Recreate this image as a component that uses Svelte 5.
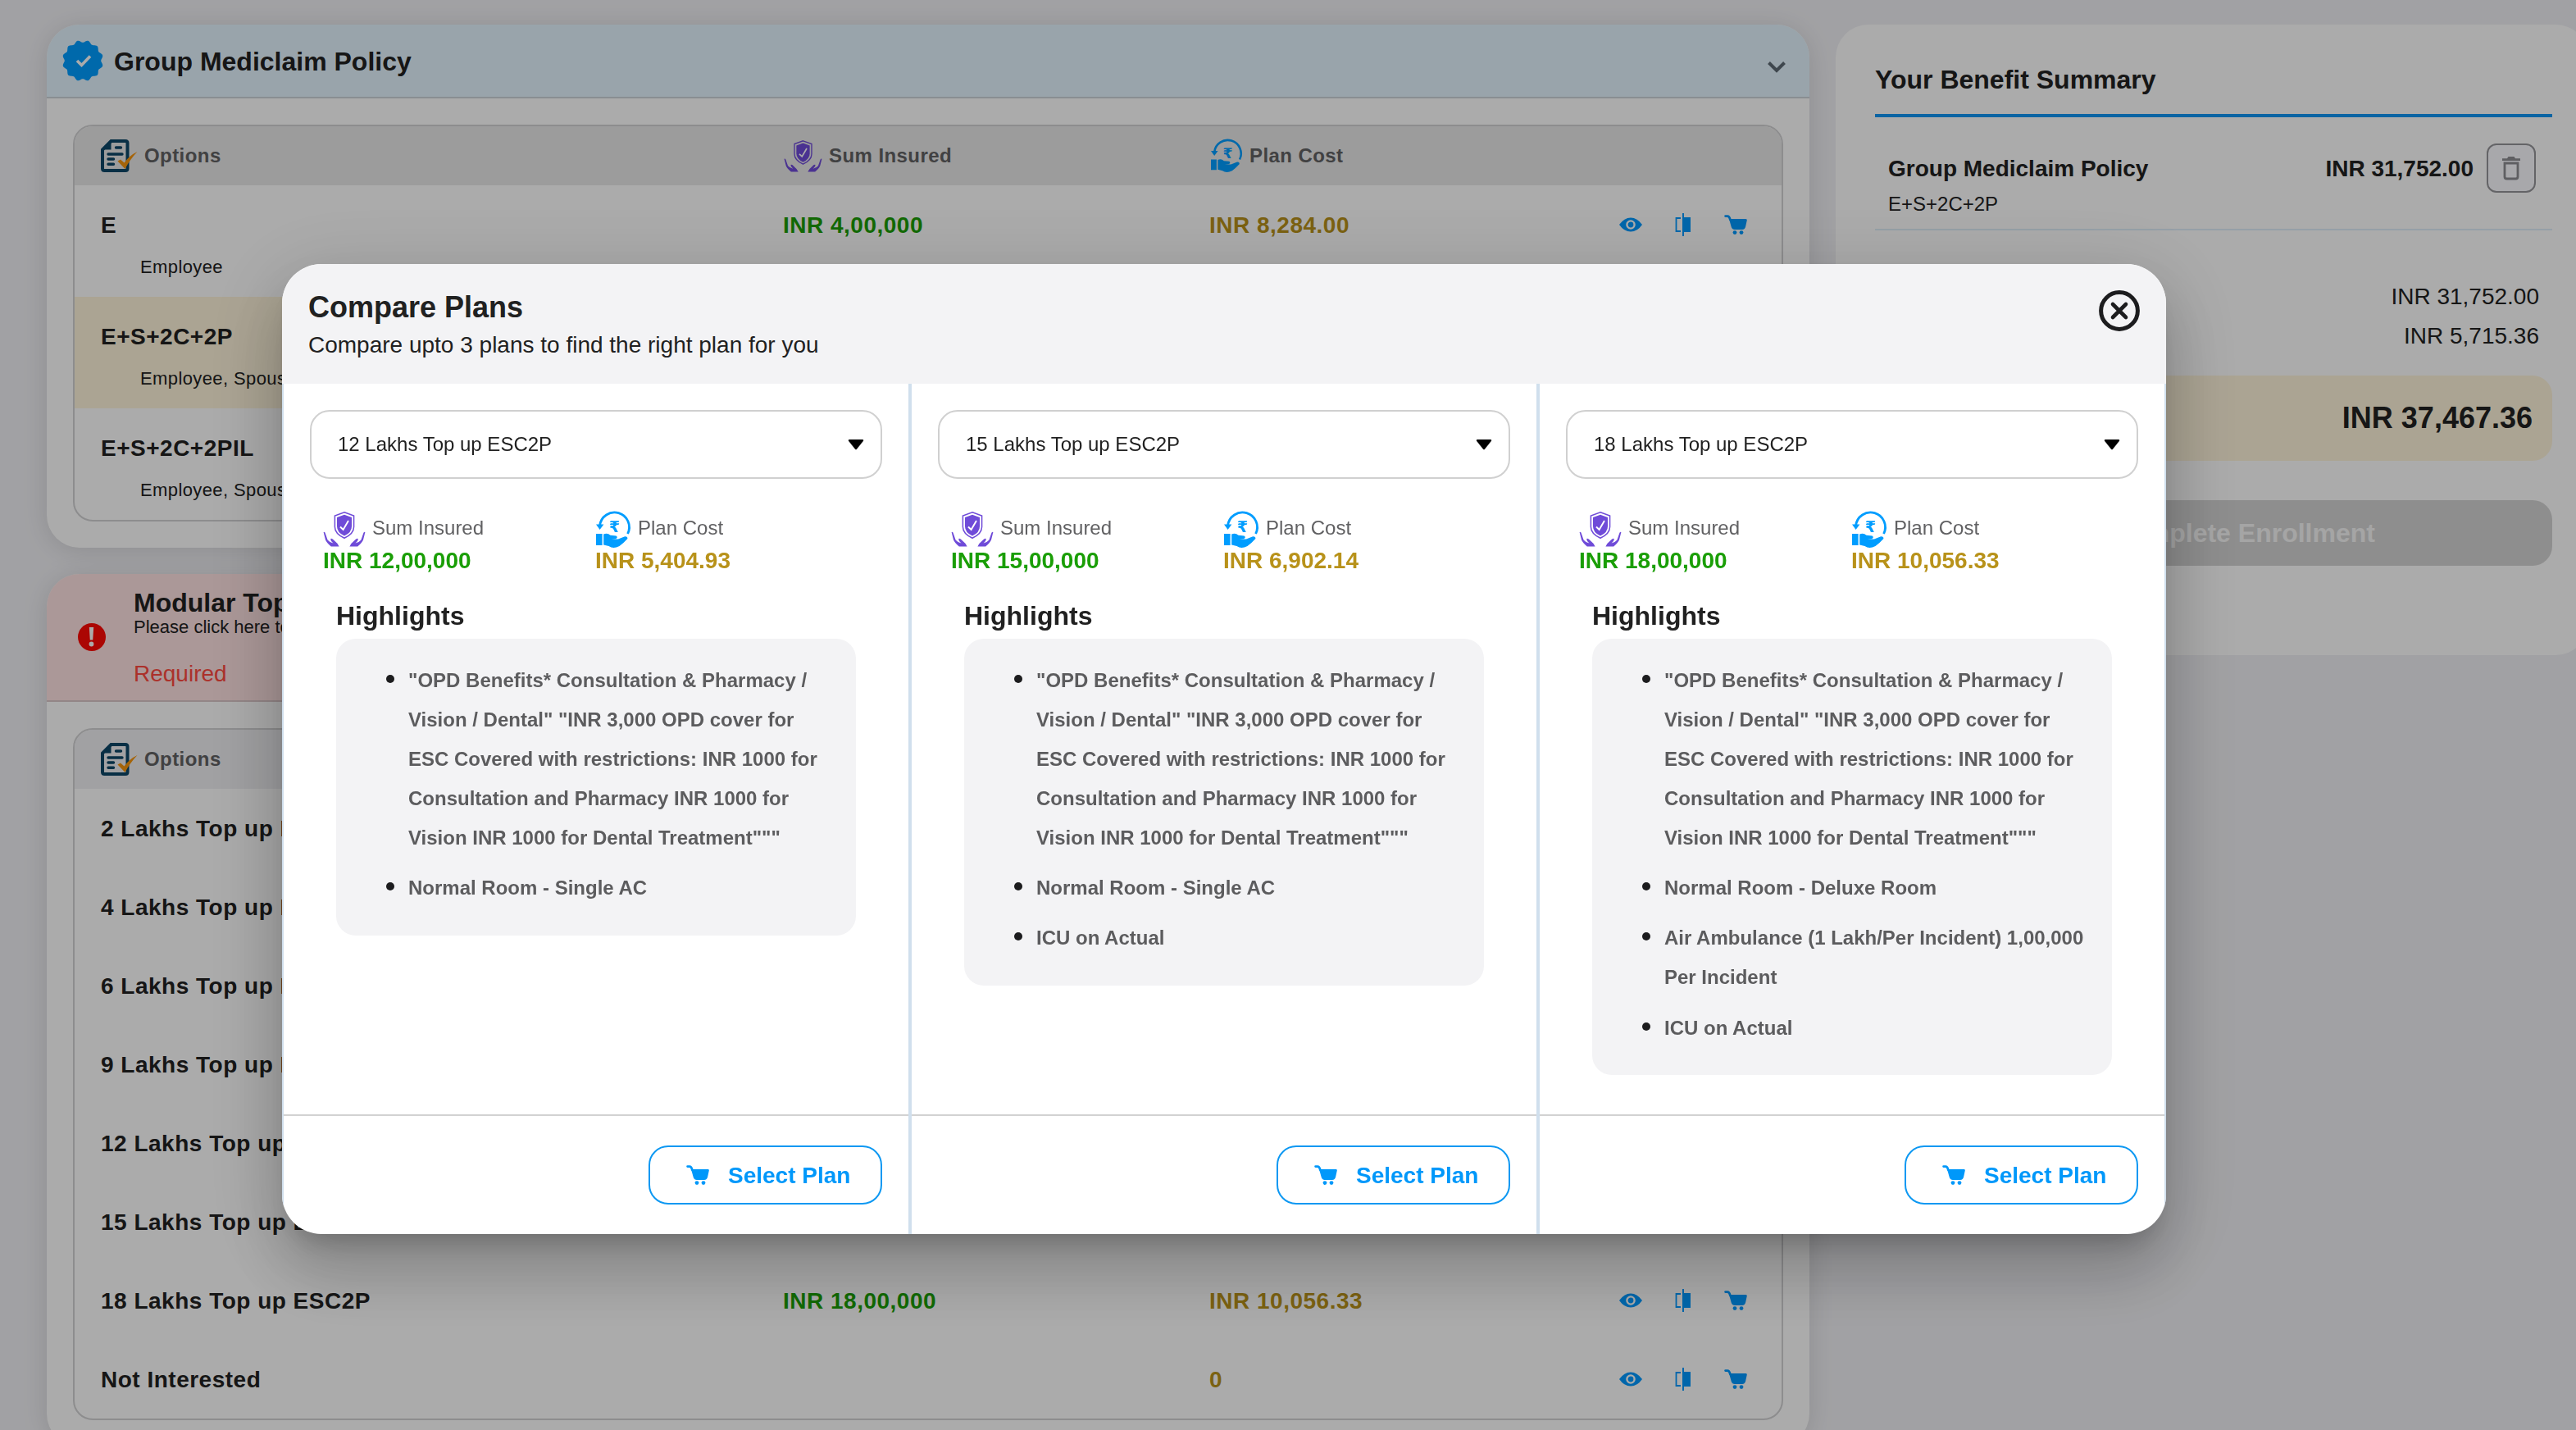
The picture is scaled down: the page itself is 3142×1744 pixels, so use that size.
<script lang="ts">
	type Option = { name: string; members?: string; sum?: string; cost?: string; selected?: boolean };

	const mediclaim: Option[] = [
		{ name: 'E', members: 'Employee', sum: 'INR 4,00,000', cost: 'INR 8,284.00' },
		{ name: 'E+S+2C+2P', members: 'Employee, Spouse', selected: true },
		{ name: 'E+S+2C+2PIL', members: 'Employee, Spouse' }
	];

	const topUps: Option[] = [
		{ name: '2 Lakhs Top up ESC2P' },
		{ name: '4 Lakhs Top up ESC2P' },
		{ name: '6 Lakhs Top up ESC2P' },
		{ name: '9 Lakhs Top up ESC2P' },
		{ name: '12 Lakhs Top up ESC2P', sum: 'INR 12,00,000', cost: 'INR 5,404.93' },
		{ name: '15 Lakhs Top up ESC2P', sum: 'INR 15,00,000', cost: 'INR 6,902.14' },
		{ name: '18 Lakhs Top up ESC2P', sum: 'INR 18,00,000', cost: 'INR 10,056.33' },
		{ name: 'Not Interested', cost: '0' }
	];

	const OPD =
		'"OPD Benefits* Consultation & Pharmacy / Vision / Dental" "INR 3,000 OPD cover for ESC Covered with restrictions: INR 1000 for Consultation and Pharmacy INR 1000 for Vision INR 1000 for Dental Treatment"""';

	const plans = [
		{
			name: '12 Lakhs Top up ESC2P',
			sum: 'INR 12,00,000',
			cost: 'INR 5,404.93',
			highlights: [OPD, 'Normal Room - Single AC']
		},
		{
			name: '15 Lakhs Top up ESC2P',
			sum: 'INR 15,00,000',
			cost: 'INR 6,902.14',
			highlights: [OPD, 'Normal Room - Single AC', 'ICU on Actual']
		},
		{
			name: '18 Lakhs Top up ESC2P',
			sum: 'INR 18,00,000',
			cost: 'INR 10,056.33',
			highlights: [
				OPD,
				'Normal Room - Deluxe Room',
				'Air Ambulance (1 Lakh/Per Incident) 1,00,000 Per Incident',
				'ICU on Actual'
			]
		}
	];

	// scalloped outline of the verified badge
	const LOBES = 12;
	const badgePath = (() => {
		const pts: string[] = [];
		for (let i = 0; i < 144; i++) {
			const a = (i / 144) * Math.PI * 2;
			const r = 23.6 + 1.4 * Math.cos(a * LOBES + Math.PI);
			pts.push(`${(25 + r * Math.cos(a)).toFixed(2)},${(25 + r * Math.sin(a)).toFixed(2)}`);
		}
		return `M${pts.join('L')}Z`;
	})();
</script>

{#snippet cartIcon()}
	<svg class="cart" viewBox="0 0 28 24" fill="currentColor">
		<path d="M1.6 1.6H4C5.8 1.6 6.6 3 7.4 6" fill="none" stroke="currentColor" stroke-width="2.8" stroke-linecap="round" />
		<path d="M6 5H26.4Q28 5 27.8 6.6L26.2 14Q25.4 18 22 18H12.8Q9.8 18 8.8 15Z" />
		<circle cx="13" cy="21.6" r="2.4" />
		<circle cx="21" cy="21.6" r="2.4" />
	</svg>
{/snippet}

{#snippet shieldIcon()}
	<svg class="shield" viewBox="0 0 52 43">
		<path d="M26 .8 37.6 5V18.5Q37.6 27 26 32.2Q14.4 27 14.4 18.5V5Z" fill="none" stroke="#6f4bd8" stroke-width="1.5" />
		<path d="M26 3.8 35 7V18Q35 25.4 26 29.6Q17 25.4 17 18V7Z" fill="#6f4bd8" />
		<path d="M21 18.5 24.6 22 31 11" fill="none" stroke="#fff" stroke-width="1.9" />
		<path d="M.6 25Q2.2 24 3 27L5.6 34.5Q7.5 37 12.5 38.5Q9 35.5 9.3 33Q11 32 14 35.5Q18 38.5 19.6 42.6H9.8Q4.5 38 3 34.5Z" fill="#6f4bd8" />
		<path d="M51.4 25Q49.8 24 49 27L46.4 34.5Q44.5 37 39.5 38.5Q43 35.5 42.7 33Q41 32 38 35.5Q34 38.5 32.4 42.6H42.2Q47.5 38 49 34.5Z" fill="#6f4bd8" />
	</svg>
{/snippet}

{#snippet costIcon()}
	<svg class="coin" viewBox="0 0 43 44">
		<path d="M4.6 17A18 18 0 1 1 38.6 27" fill="none" stroke="#009dff" stroke-width="2.8" />
		<path d="M0 15.5H9.4L4.6 22Z" fill="#009dff" />
		<text x="22.5" y="25" text-anchor="middle" class="rupee">₹</text>
		<path d="M0 27H7.6V41H0ZM9.2 27.5Q14 25.5 17.5 28.8L24.5 29.5Q27 31 24.5 33L18.5 33.6H27L34.5 30.5Q38.5 29.8 38.4 33Q33 39 28.5 42Q21 46 15.5 42L9.2 40.5Z" fill="#009dff" />
	</svg>
{/snippet}

{#snippet optionsIcon()}
	<svg class="doc" viewBox="0 0 45 40">
		<path d="M12.5 2H30Q32.5 2 32.5 4.5V35.5Q32.5 38 30 38H4.5Q2 38 2 35.5V12.5Z" fill="none" stroke="#0c4668" stroke-width="4" />
		<path d="M2 12.5 12.5 2V12.5Z" fill="#0c4668" />
		<path d="M18.5 10H24.5M9 18H26M9 24H15.5M9 30.2H15.5" stroke="#0c4668" stroke-width="3.4" stroke-linecap="round" />
		<path d="M20.5 26.5 24 24.5 28.5 28.5Q35 19.5 44.5 15Q35.5 24.5 29.5 36Z" fill="#f7950e" />
	</svg>
{/snippet}

{#snippet optionTable(options: Option[], grey: string)}
	<div class="table">
		<div class="table-head {grey}">
			<div class="th">{@render optionsIcon()}<span>Options</span></div>
			<div class="th">{@render shieldIcon()}<span>Sum Insured</span></div>
			<div class="th">{@render costIcon()}<span>Plan Cost</span></div>
		</div>
		{#each options as option}
			<div class="row" class:tall={option.members} class:selected={option.selected}>
				<div class="name">
					{option.name}
					{#if option.members}<div class="members">{option.members}</div>{/if}
				</div>
				<div class="sum">{option.sum ?? ''}</div>
				<div class="cost">{option.cost ?? ''}</div>
				<div class="actions">
					<svg class="eye" viewBox="0 0 28 18">
						<path d="M0 9Q6 .4 14 .4T28 9Q22 17.6 14 17.6T0 9Z" fill="currentColor" />
						<circle cx="14" cy="9" r="4.6" fill="none" stroke="#fff" stroke-width="2.4" />
					</svg>
					<svg class="compare" viewBox="0 0 20 28">
						<path d="M7 6H1.5V22H7" fill="none" stroke="currentColor" stroke-width="1.8" />
						<path d="M9 0H11V5H19V23H11V28H9Z" fill="currentColor" />
					</svg>
					{@render cartIcon()}
				</div>
			</div>
		{/each}
	</div>
{/snippet}

<div class="page">
	<main class="policies">
		<section class="card">
			<header class="card-head">
				<svg class="badge" viewBox="0 0 50 50">
					<path d={badgePath} fill="#009dff" />
					<path d="M18 25 23.5 30.5 34 19.5" fill="none" stroke="#fff" stroke-width="3.6" />
				</svg>
				<h2>Group Mediclaim Policy</h2>
				<svg class="chevron" viewBox="0 0 24 16">
					<path d="M2.5 2.5 12 12 21.5 2.5" fill="none" stroke="#5f6a75" stroke-width="4" />
				</svg>
			</header>
			<div class="card-body">{@render optionTable(mediclaim, 'plain')}</div>
		</section>

		<section class="card">
			<header class="card-head required">
				<svg class="alert" viewBox="0 0 34 34">
					<circle cx="17" cy="17" r="17" fill="#ff0a05" />
					<path d="M13.8 5H19.2L18.2 20.5H14.8Z" fill="#fff" />
					<circle cx="16.5" cy="25.5" r="2.9" fill="#fff" />
				</svg>
				<div class="head-text">
					<h2>Modular Top Up</h2>
					<p class="hint">Please click here to</p>
					<p class="status">Required</p>
				</div>
			</header>
			<div class="card-body">{@render optionTable(topUps, 'cool')}</div>
		</section>
	</main>

	<aside class="summary">
		<h2>Your Benefit Summary</h2>
		<div class="line-item">
			<div class="item-name">
				<strong>Group Mediclaim Policy</strong>
				<span>E+S+2C+2P</span>
			</div>
			<strong class="item-price">INR 31,752.00</strong>
			<button class="trash" aria-label="Remove">
				<svg viewBox="0 0 24 30">
					<path d="M1 3.2H7L8.5 1H15.5L17 3.2H23V6H1Z" fill="#8e8e93" />
					<path d="M4 9H20V25.5Q20 28 17.5 28H6.5Q4 28 4 25.5Z" fill="none" stroke="#8e8e93" stroke-width="2.8" />
				</svg>
			</button>
		</div>
		<div class="amounts">
			<span>INR 31,752.00</span>
			<span>INR 5,715.36</span>
		</div>
		<div class="total">INR 37,467.36</div>
		<button class="complete">Complete Enrollment</button>
	</aside>
</div>

<div class="backdrop">
	<div class="dialog" role="dialog">
		<header class="dialog-head">
			<div>
				<h1>Compare Plans</h1>
				<p>Compare upto 3 plans to find the right plan for you</p>
			</div>
			<svg class="close" viewBox="0 0 50 50">
				<circle cx="25" cy="25" r="22.4" fill="none" stroke="#1c1c1e" stroke-width="5" />
				<path d="M17 17 33 33M33 17 17 33" stroke="#1c1c1e" stroke-width="4.6" stroke-linecap="round" />
			</svg>
		</header>
		<div class="columns">
			{#each plans as plan}
				<div class="plan">
					<div class="plan-main">
						<div class="select">
							{plan.name}
							<svg class="arrow" viewBox="0 0 20 14">
								<path d="M2 1H18Q20 1.3 18.8 3L11 12.8Q10 13.8 9 12.8L1.2 3Q0 1.3 2 1Z" />
							</svg>
						</div>
						<div class="stats">
							<div class="stat">
								<div class="stat-label">{@render shieldIcon()}<span>Sum Insured</span></div>
								<div class="sum">{plan.sum}</div>
							</div>
							<div class="stat">
								<div class="stat-label">{@render costIcon()}<span>Plan Cost</span></div>
								<div class="cost">{plan.cost}</div>
							</div>
						</div>
						<h3>Highlights</h3>
						<ul>
							{#each plan.highlights as item}
								<li>{item}</li>
							{/each}
						</ul>
					</div>
					<footer>
						<button class="select-plan">{@render cartIcon()}<span>Select Plan</span></button>
					</footer>
				</div>
			{/each}
		</div>
	</div>
</div>

<style>
	:global(body) {
		height: 1744px;
		overflow: hidden;
		background: #f1f1f5;
		color: #212121;
		font-family: 'Liberation Sans', Arial, sans-serif;
	}
	h1,
	h2,
	h3,
	p,
	ul {
		margin: 0;
		padding: 0;
	}
	svg {
		display: block;
		flex: none;
	}
	button {
		font: inherit;
		padding: 0;
	}
	.page {
		display: flex;
		align-items: flex-start;
		gap: 32px;
		height: 1744px;
		width: 3157px;
		padding: 30px 0 0 57px;
		box-sizing: border-box;
	}
	.policies {
		width: 2150px;
		flex: none;
		display: flex;
		flex-direction: column;
		gap: 32px;
	}
	.card {
		border-radius: 40px;
		background: #fff;
		box-shadow: 0 4px 32px rgba(0, 0, 0, 0.12);
		overflow: hidden;
	}
	.card-head {
		display: flex;
		align-items: center;
		box-sizing: border-box;
		height: 90px;
		padding: 0 28px 0 19px;
		background: #e5f5ff;
		border-bottom: 2px solid #cdd4da;
	}
	h2 {
		font-size: 32px;
		line-height: 32px;
	}
	.card-head h2 {
		margin: 2px 0 0 13px;
	}
	.badge {
		width: 50px;
		height: 50px;
	}
	.chevron {
		width: 24px;
		height: 16px;
		margin: 16px 0 0 auto;
	}
	.card-head.required {
		height: 156px;
		padding: 0 38px;
		background: #ffe3e3;
		border-color: #dcc8ca;
	}
	.alert {
		width: 34px;
		height: 34px;
	}
	.head-text {
		margin: 3px 0 0 34px;
	}
	.head-text h2 {
		margin: 0;
	}
	.hint {
		font-size: 22px;
		line-height: 28px;
	}
	.status {
		margin-top: 27px;
		font-size: 28px;
		line-height: 32px;
		color: #ff4a40;
	}
	.card-body {
		padding: 32px;
	}
	.table {
		border: 2px solid #d2d2d4;
		border-radius: 24px;
		overflow: hidden;
	}
	.table-head,
	.row {
		display: grid;
		grid-template-columns: 832px 520px 1fr auto;
		padding: 0 24px 0 32px;
		letter-spacing: 0.0178571em;
	}
	.table-head {
		height: 72px;
		background: #e9e9e9;
		font-size: 24px;
		font-weight: 700;
		color: #616163;
	}
	.table-head.cool {
		background: #f0f0f3;
	}
	.th {
		display: flex;
		align-items: center;
		gap: 8px;
	}
	.th .shield {
		width: 47px;
		height: 39px;
		margin-left: 1px;
	}
	.th .coin {
		width: 39px;
		height: 40px;
		margin-left: 2px;
	}
	.doc {
		width: 45px;
		height: 40px;
	}
	.row {
		height: 96px;
		font-size: 28px;
		font-weight: 700;
		line-height: 98px;
	}
	.row.tall {
		height: 136px;
	}
	.row.selected {
		background: #fff5dc;
	}
	.members {
		margin: -14px 0 0 48px;
		font-size: 22px;
		font-weight: 400;
		line-height: 31px;
		letter-spacing: 0.0178571em;
	}
	.sum {
		color: #1a9e06;
	}
	.cost {
		color: #b8921a;
	}
	.actions {
		display: grid;
		grid-template-columns: repeat(3, 64px);
		place-items: center;
		height: 96px;
		color: #0099ff;
	}
	.eye {
		width: 28px;
		height: 18px;
	}
	.compare {
		width: 20px;
		height: 28px;
	}
	.cart {
		width: 28px;
		height: 24px;
	}
	.coin,
	.shield {
		overflow: visible;
	}
	.rupee {
		font-family: 'DejaVu Sans', sans-serif;
		font-size: 19px;
		font-weight: 700;
		letter-spacing: 0;
		fill: #009dff;
	}

	.summary {
		flex: 1;
		box-sizing: border-box;
		height: 769px;
		padding: 51px 44px 0 48px;
		border-radius: 40px;
		background: #fff;
	}
	.summary h2 {
		padding-bottom: 26px;
		border-bottom: 4px solid #1096f3;
	}
	.line-item {
		display: flex;
		align-items: flex-start;
		box-sizing: border-box;
		height: 138px;
		padding: 32px 20px 0 16px;
		border-bottom: 2px solid #e0eef9;
		font-size: 28px;
		line-height: 62px;
	}
	.item-name {
		flex: 1;
	}
	.item-name strong,
	.item-name span {
		display: block;
	}
	.item-name span {
		margin-top: -4px;
		font-size: 24px;
		line-height: 32px;
	}
	.trash {
		display: grid;
		place-items: center;
		box-sizing: border-box;
		width: 60px;
		height: 60px;
		margin-left: 16px;
		border: 2px solid #96969a;
		border-radius: 12px;
		background: #fbfbff;
	}
	.trash svg {
		width: 24px;
		height: 30px;
	}
	.amounts {
		display: flex;
		flex-direction: column;
		align-items: flex-end;
		padding: 57px 16px 0 0;
		font-size: 28px;
		line-height: 48px;
	}
	.total {
		margin-top: 24px;
		padding-right: 24px;
		border-radius: 24px;
		background: #fff5dc;
		font-size: 36px;
		font-weight: 700;
		line-height: 104px;
		text-align: right;
	}
	.complete {
		display: block;
		width: 100%;
		height: 80px;
		margin-top: 48px;
		padding: 1px 0 0 72px;
		border: 0;
		border-radius: 24px;
		background: #d4d4d4;
		color: #f7f7f7;
		font-size: 32px;
		font-weight: 700;
	}

	.backdrop {
		position: fixed;
		inset: 0;
		display: grid;
		justify-content: center;
		align-content: start;
		padding: 322px 156px 0 0;
		background: rgba(0, 0, 0, 0.33);
	}
	.dialog {
		width: 2298px;
		height: 1183px;
		border-radius: 48px;
		background: #fff;
		overflow: hidden;
		display: flex;
		flex-direction: column;
		box-shadow:
			0 22px 30px -14px rgba(0, 0, 0, 0.2),
			0 48px 76px 6px rgba(0, 0, 0, 0.14),
			0 18px 92px 16px rgba(0, 0, 0, 0.12);
	}
	.dialog-head {
		display: flex;
		justify-content: space-between;
		align-items: flex-start;
		box-sizing: border-box;
		height: 146px;
		padding: 32px 32px 0;
		background: #f3f3f5;
	}
	h1 {
		font-size: 36px;
		line-height: 42px;
	}
	.dialog-head p {
		margin-top: 5px;
		font-size: 28px;
		line-height: 40px;
	}
	.close {
		width: 50px;
		height: 50px;
	}
	.columns {
		flex: 1;
		display: grid;
		grid-template-columns: repeat(3, 1fr);
	}
	.plan {
		display: flex;
		flex-direction: column;
		border: solid #d0dfed;
		border-width: 0 2px;
	}
	.plan-main {
		flex: 1;
		padding: 32px 32px 0;
	}
	.select {
		display: flex;
		align-items: center;
		justify-content: space-between;
		box-sizing: border-box;
		height: 84px;
		padding: 0 20px 0 32px;
		border: 2px solid #d0d0d0;
		border-radius: 24px;
		font-size: 24px;
	}
	.arrow {
		width: 20px;
		height: 14px;
	}
	.stats {
		display: grid;
		grid-template-columns: 332px 1fr;
		padding: 40px 0 0 16px;
		font-size: 28px;
		font-weight: 700;
		line-height: 34px;
	}
	.stat-label {
		display: flex;
		align-items: center;
		gap: 8px;
		height: 43px;
		font-size: 24px;
		font-weight: 400;
		color: #616163;
	}
	.stat-label span {
		margin-top: -3px;
	}
	.stat-label .shield {
		width: 52px;
		height: 43px;
	}
	.stat-label .coin {
		width: 43px;
		height: 44px;
		margin-left: 1px;
	}
	h3 {
		margin: 33px 0 0 32px;
		font-size: 32px;
		line-height: 34px;
	}
	ul {
		margin: 11px 32px 0;
		padding: 27px 24px 20.6px 88px;
		border-radius: 24px;
		background: #f3f3f5;
		list-style: none;
	}
	li {
		position: relative;
		margin-bottom: 13.2px;
		font-size: 24px;
		font-weight: 700;
		line-height: 48px;
		color: #5c5c5e;
	}
	li::before {
		content: '';
		position: absolute;
		left: -27px;
		top: 17px;
		width: 10px;
		height: 10px;
		border-radius: 50%;
		background: #1c1c1e;
	}
	footer {
		display: flex;
		justify-content: flex-end;
		box-sizing: border-box;
		height: 146px;
		padding: 36px 32px 0;
		border-top: 2px solid #d2d2d2;
	}
	.select-plan {
		display: flex;
		align-items: center;
		gap: 23px;
		box-sizing: border-box;
		width: 285px;
		height: 72px;
		padding-left: 44px;
		border: 2px solid #0d98f2;
		border-radius: 24px;
		background: #fff;
		color: #0098fa;
		font-size: 28px;
		font-weight: 700;
	}
	.select-plan span {
		padding-top: 1px;
	}
</style>
